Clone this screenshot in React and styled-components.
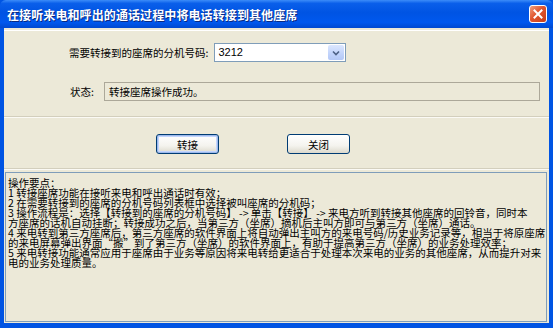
import React, { useState } from "react";
import styled, { createGlobalStyle } from "styled-components";

// 전역 스타일
const GlobalStyle = createGlobalStyle`
    html, body {
        margin: 0;
        padding: 0;
        background: #ece9d8;
    }
    * {
        box-sizing: border-box;
    }
`;

const FONT = `"Noto Sans CJK SC", "Liberation Sans", sans-serif`;

// XP 창 프레임
const Window = styled.div`
    width: 553px;
    height: 328px;
    display: flex;
    flex-direction: column;
    background: #0054e3;
    padding: 0 4px 5px 4px;
    font-family: ${FONT};
    overflow: hidden;
`;

const TitleBar = styled.div`
    height: 28px;
    margin: 0 -4px;
    padding: 0 5px 0 7px;
    display: flex;
    align-items: center;
    justify-content: space-between;
    background: linear-gradient(
        to bottom,
        #3c8cf9 0%,
        #0a5fea 12%,
        #0054e3 45%,
        #0058ee 80%,
        #0049d0 100%
    );
    border-radius: 6px 6px 0 0;
`;

const TitleText = styled.span`
    color: #fff;
    font-size: 12px;
    font-weight: bold;
    letter-spacing: 0.1px;
    text-shadow: 1px 1px 0 #0a2a80;
`;

const CloseButton = styled.div`
    width: 18px;
    height: 18px;
    margin-right: 1px;
    border: 1px solid #fff;
    border-radius: 3px;
    background: linear-gradient(135deg, #f0a080 0%, #e0552e 45%, #c53d18 100%);
    display: flex;
    align-items: center;
    justify-content: center;
`;

const Body = styled.div`
    flex: 1;
    display: flex;
    flex-direction: column;
    background: #ece9d8;
    padding: 2px 0 1px 0;
`;

// 상단 입력 영역
const Panel = styled.div`
    display: flex;
    flex-direction: column;
    gap: 20px;
    padding: 12px 0 15px 0;
    border-top: 1px solid #fff;
    border-bottom: 1px solid #d3cfbd;
    box-shadow: 0 1px 0 #fbfaf5;
`;

const Row = styled.div`
    display: flex;
    align-items: center;
    gap: ${({ $gap }) => $gap}px;
    padding-left: ${({ $indent }) => $indent}px;
`;

const Label = styled.span`
    font-size: 10.5px;
    color: #000;
    line-height: 19px;
`;

const Combo = styled.div`
    width: 132px;
    height: 19px;
    display: flex;
    align-items: stretch;
    background: #fff;
    border: 1px solid #7f9db9;
`;

const ComboValue = styled.span`
    flex: 1;
    padding-left: 3px;
    font-family: "Liberation Sans", sans-serif;
    font-size: 11px;
    line-height: 17px;
`;

const ComboArrow = styled.span`
    width: 16px;
    margin: 1px;
    border-radius: 2px;
    background: linear-gradient(to bottom, #dce7fe 0%, #c1d3fb 60%, #b4c8f6 100%);
    display: flex;
    align-items: center;
    justify-content: center;
`;

const StatusBox = styled.div`
    width: 436px;
    height: 19px;
    border: 1px solid #aca899;
    background: #ece9d8;
    padding-left: 4px;
    font-size: 10.5px;
    line-height: 17px;
`;

// 버튼 영역
const ButtonBar = styled.div`
    display: flex;
    gap: 68px;
    padding: 17px 0 14px 152px;
    border-bottom: 1px solid #d3cfbd;
    box-shadow: 0 1px 0 #fbfaf5;
`;

const Button = styled.button.withConfig({
    shouldForwardProp: (prop) => prop !== "$focused"
})`
    width: 63px;
    height: 20px;
    padding: 0;
    font-family: ${FONT};
    font-size: 10.5px;
    color: #000;
    border: 1px solid #003c74;
    border-radius: 3px;
    background: linear-gradient(to bottom, #ffffff 0%, #f4f3ee 60%, #dcd9cc 100%);
    box-shadow: ${({ $focused }) =>
        $focused ? "inset 0 0 0 1px #9db9eb, inset 0 0 0 2px #c3d5fd" : "none"};
    cursor: pointer;
`;

// 안내 텍스트 영역
const Notes = styled.div`
    flex: 1;
    margin: 3px 2px 0 1px;
    border: 1px solid #7f9db9;
    background: #ece9d8;
    padding: 5px 2px 2px 2px;
    font-size: 10.5px;
    line-height: 10px;
    color: #000;
`;

const NoteLine = styled.div`
    white-space: nowrap;
    height: 10px;
`;

const notes = [
    "操作要点：",
    "1 转接座席功能在接听来电和呼出通话时有效；",
    "2 在需要转接到的座席的分机号码列表框中选择被叫座席的分机码；",
    "3 操作流程是：选择【转接到的座席的分机号码】 -> 单击【转接】 -> 来电方听到转接其他座席的回铃音，同时本",
    "方座席的话机自动挂断；转接成功之后，当第三方（坐席）摘机后主叫方即可与第三方（坐席）通话。",
    "4 来电转到第三方座席后，第三方座席的软件界面上将自动弹出主叫方的来电号码/历史业务记录等，相当于将原座席",
    "的来电屏幕弹出界面“搬”到了第三方（坐席）的软件界面上，有助于提高第三方（坐席）的业务处理效率；",
    "5 来电转接功能通常应用于座席由于业务等原因将来电转给更适合于处理本次来电的业务的其他座席，从而提升对来",
    "电的业务处理质量。"
];

function App() {
    const [extension] = useState("3212");
    const [status] = useState("转接座席操作成功。");

    return (
        <>
            <GlobalStyle />
            <Window>
                <TitleBar>
                    <TitleText>在接听来电和呼出的通话过程中将电话转接到其他座席</TitleText>
                    <CloseButton>
                        <svg width="10" height="10" viewBox="0 0 10 10">
                            <path d="M1.5 1.5 L8.5 8.5 M8.5 1.5 L1.5 8.5" stroke="#fff" strokeWidth="2" strokeLinecap="square" />
                        </svg>
                    </CloseButton>
                </TitleBar>
                <Body>
                    <Panel>
                        <Row $indent={65} $gap={6}>
                            <Label>需要转接到的座席的分机号码:</Label>
                            <Combo>
                                <ComboValue>{extension}</ComboValue>
                                <ComboArrow>
                                    <svg width="8" height="6" viewBox="0 0 8 6">
                                        <path d="M1 1.5 L4 4.5 L7 1.5" stroke="#4d6185" strokeWidth="1.6" fill="none" />
                                    </svg>
                                </ComboArrow>
                            </Combo>
                        </Row>
                        <Row $indent={66} $gap={10}>
                            <Label>状态:</Label>
                            <StatusBox>{status}</StatusBox>
                        </Row>
                    </Panel>
                    <ButtonBar>
                        <Button $focused>转接</Button>
                        <Button>关闭</Button>
                    </ButtonBar>
                    <Notes>
                        {notes.map((line, i) => (
                            <NoteLine key={i}>{line}</NoteLine>
                        ))}
                    </Notes>
                </Body>
            </Window>
        </>
    );
}

export default App;
